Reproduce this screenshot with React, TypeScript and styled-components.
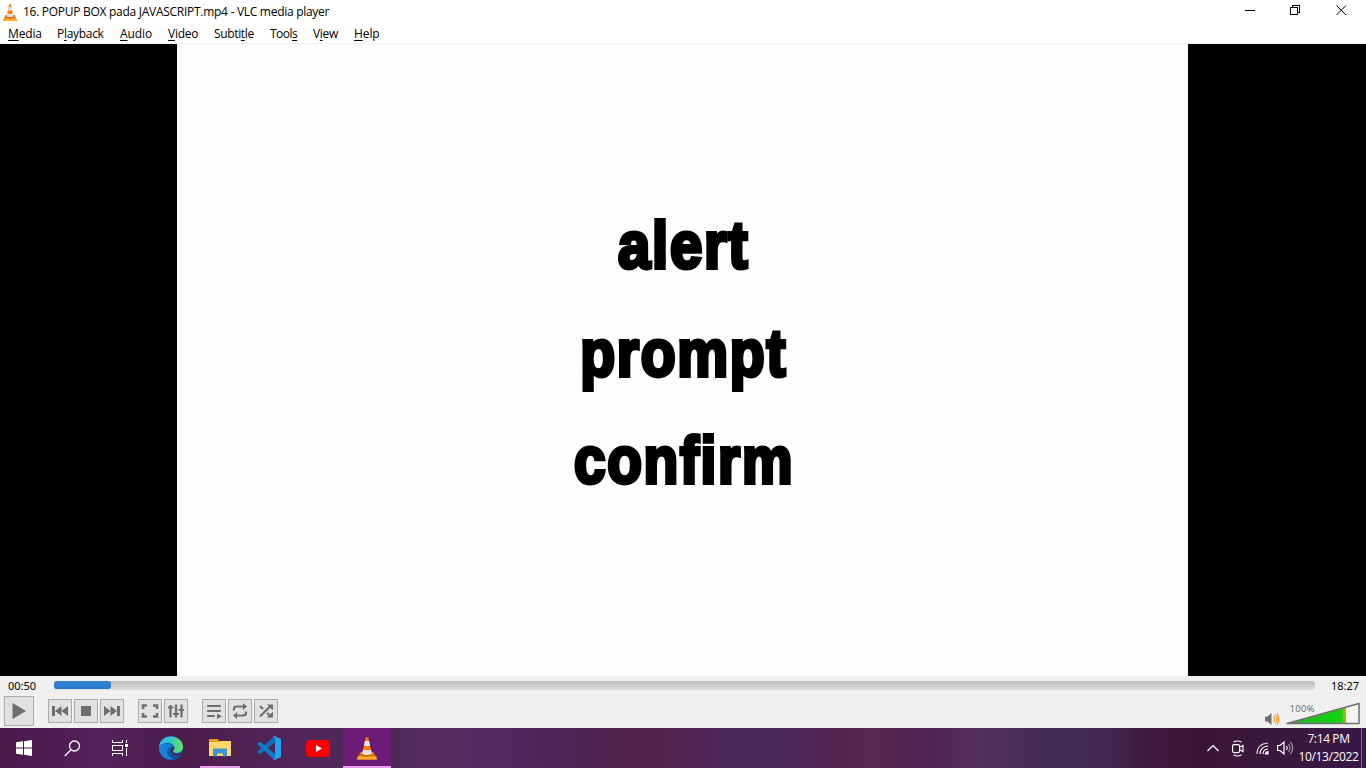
import React from 'react';
import styled, { createGlobalStyle } from 'styled-components';

const Global = createGlobalStyle`
  * { box-sizing: border-box; }
  body { margin: 0; background: #000; overflow: hidden; font-family: "Open Sans", "Noto Sans", sans-serif; font-size: 12px; color: #000; }
  svg { display: block; flex: none; }
`;
const Window = styled.div`width: 1366px; height: 768px; display: flex; flex-direction: column;`;
const TitleBar = styled.header`height: 24px; background: #fff; display: flex; align-items: center; padding-left: 3px;`;
const Title = styled.span`margin-left: 6px; flex: 1; letter-spacing: -0.28px; white-space: pre; line-height: 22px;`;
const Caption = styled.div`width: 46px; height: 20px; display: flex; justify-content: center; align-items: center;`;
const Captions = styled.div`display: flex; align-self: flex-start; margin-right: 2px;`;
const MenuBar = styled.nav`height: 20px; background: #fff; border-bottom: 1px solid #f0f0f0; display: flex; padding-left: 8px;`;
const MenuItem = styled.span<{ $w: number; $ls: number }>`width: ${p => p.$w}px; letter-spacing: ${p => p.$ls}px; line-height: 19px; white-space: nowrap; u { text-underline-offset: 2px; text-decoration-thickness: 1px; text-decoration-skip-ink: none; }`;
const Stage = styled.main`height: 632px; background: #000; display: flex; padding-left: 177px;`;
const Slide = styled.div`width: 1011px; background: #fdfdfd; display: flex; flex-direction: column; align-items: center; padding: 148px 0 0 3px;`;
const Word = styled.div<{ $sx: number }>`
  height: 107.5px; font: 700 66px/107.5px "Liberation Sans", Arial, sans-serif; -webkit-text-stroke: 4px #000;
  letter-spacing: 2px; transform: scaleX(${p => p.$sx}); font-variant-ligatures: none; white-space: nowrap;
`;
const Controls = styled.section`height: 52px; background: #f0f0f0; display: flex; flex-direction: column;`;
const SeekRow = styled.div`height: 20px; display: flex; align-items: center; padding: 0 7px 0 8px; justify-content: space-between;`;
const Time = styled.span`font: 11px/20px "Noto Sans", sans-serif; width: 28px; white-space: nowrap; text-align: right;`;
const Track = styled.div`width: 1261px; height: 9px; margin: 0 0 2px 1px; border-radius: 3px; background: linear-gradient(#bdbdbd, #dcdcdc);`;
const Played = styled.div`width: 57px; height: 8px; border-radius: 3px; background: linear-gradient(#3586d3, #2179cb);`;
const ButtonRow = styled.div`height: 32px; display: flex; align-items: flex-start; padding-left: 4px;`;
const Btn = styled.button<{ $big?: boolean; $gap?: number }>`
  width: ${p => (p.$big ? 30 : 24)}px; height: ${p => (p.$big ? 30 : 24)}px; padding: 0; margin: ${p => (p.$big ? 0 : 3)}px 0 0 ${p => p.$gap ?? 2}px;
  border: 1px solid #adadad; background: #e1e1e1; display: flex; align-items: center; justify-content: center;
`;
const Volume = styled.div`margin-left: auto; margin-right: 6px; display: flex; align-items: flex-end; height: 32px; gap: 5px; svg:first-child { margin-bottom: 2px; }`;
const Taskbar = styled.footer`
  height: 40px; display: flex; color: #fff;
  background: linear-gradient(90deg, #48184a 0, #54205a 100px, #4b1c4b 180px, #52265a 300px, #4b2855 390px, #572c60 430px, #512860 500px, #4c2350 590px, #54204b 650px, #4c2858 720px, #4e2a5b 790px, #522351 830px, #5a2750 870px, #4d2352 920px, #53305c 980px, #432b56 1050px, #432951 1100px, #401a40 1140px, #3b1537 1200px, #3a183c 1260px, #381847 1366px);
`;
const Task = styled.div<{ $w?: number; $open?: boolean; $active?: boolean }>`
  width: ${p => p.$w ?? 49}px; height: 40px; display: flex; align-items: center; justify-content: center;
  ${p => p.$active && 'background: #6c1c77;'}
  ${p => p.$open && `box-shadow: inset 0 -2px #e99cec;`}
`;
const Gap = styled.div<{ $w: number }>`width: ${p => p.$w}px; flex: none;`;
const Tray = styled.div`margin-left: auto; display: flex; align-items: center; padding-right: 4px;`;
const Clock = styled.div`width: 61px; text-align: center; font-size: 12px; line-height: 18px; letter-spacing: -0.38px; white-space: nowrap; margin-left: 4px;`;
const Peek = styled.div`width: 1px; height: 40px; background: #7a6685; margin-left: 2px;`;

const Cone = ({ w, h }: { w: number; h: number }) => (
  <svg width={w} height={h} viewBox="0 0 20 23" preserveAspectRatio="none">
    <path d="M3.500 15h13l3.500 7.500H0z" fill="#e8780c" /><path d="M.6 19.500h18.800l.6 3H0z" fill="#ffb02a" />
    <path d="M8.800.5h2.400L15 17q-5 2.500-10 0z" fill="#f47c08" />
    <path d="M7.900 4h4.200l1 4.500q-3.100 1-6.200 0zM6 12.700q4 1.300 8 0l1 4.300q-5 2-10 0z" fill="#e4e2e4" />
    <path d="M4.500 17.800q5.500 2.500 11 0" fill="none" stroke="#c4560a" />
  </svg>
);
const G = '#6e6e6e';
const menus: [string, string, string, number, number][] = [
  ['', 'M', 'edia', 49, -0.15], ['P', 'l', 'ayback', 63, -0.3], ['', 'A', 'udio', 48, -0.1], ['', 'V', 'ideo', 46, -0.25],
  ['Subti', 't', 'le', 56, -0.35], ['Tool', 's', '', 43, -0.55], ['V', 'i', 'ew', 41, -0.3], ['', 'H', 'elp', 40, -0.1],
];

export default function App() {
  return (
    <Window>
      <Global />
      <TitleBar>
        <Cone w={14} h={17} />
        <Title>16. POPUP BOX pada JAVASCRIPT.mp4 - VLC media player</Title>
        <Captions>
          <Caption><svg width="12" height="10" shapeRendering="crispEdges"><path d="M2 5.500h10" stroke="#000" /></svg></Caption>
          <Caption><svg width="10" height="10" shapeRendering="crispEdges" fill="none" stroke="#000"><path d="M.5 2.500h7v7h-7zM2.500 2V.5h7v7H8" /></svg></Caption>
          <Caption><svg width="11" height="11" stroke="#000"><path d="M.5.500l9.500 9.500m0-9.500l-9.500 9.500" /></svg></Caption>
        </Captions>
      </TitleBar>
      <MenuBar>
        {menus.map(([a, b, c, w, ls]) => <MenuItem key={a + b + c} $w={w} $ls={ls}>{a}<u>{b}</u>{c}</MenuItem>)}
      </MenuBar>
      <Stage>
        <Slide>
          <Word $sx={0.88}>alert</Word>
          <Word $sx={0.865}>prompt</Word>
          <Word $sx={0.86}>confirm</Word>
        </Slide>
      </Stage>
      <Controls>
        <SeekRow><Time>00:50</Time><Track><Played /></Track><Time>18:27</Time></SeekRow>
        <ButtonRow>
          <Btn $big $gap={0}><svg width="16" height="18"><path d="M1.500 1l13.500 8-13.500 8z" fill={G} /></svg></Btn>
          <Btn $gap={14}><svg width="16" height="12" fill={G}><path d="M0 1h3v10H0zM9.500 1v10L3 6zM16 1v10L9.500 6z" /></svg></Btn>
          <Btn><svg width="10" height="10"><path d="M0 0h10v10H0z" fill={G} /></svg></Btn>
          <Btn><svg width="16" height="12" fill={G}><path d="M13 1h3v10h-3zM6.500 1v10l6.500-5zM0 1v10l6.500-5z" /></svg></Btn>
          <Btn $gap={14}><svg width="18" height="14" fill="none" stroke={G} strokeWidth="2.500"><path d="M2 5V1.500h4M12 1.500h4V5M16 9v3.500h-4M6 12.500H2V9" /></svg></Btn>
          <Btn><svg width="16" height="14" fill="none" stroke={G} strokeWidth="2.200"><path d="M2.500 1v12.500M8 .5v13M13.500.500v13M0 3.500h5.500M5 10h6M10.500 6H16" /></svg></Btn>
          <Btn $gap={14}><svg width="16" height="15" fill="none" stroke={G} strokeWidth="2.200" strokeLinecap="round"><path d="M2 2h12M2 7h12M2 12h6" /><path d="M11 9.500v5.500l5-2.800z" fill={G} stroke="none" /></svg></Btn>
          <Btn><svg width="16" height="16" fill="none" stroke={G} strokeWidth="2.200"><path d="M2 7.500V6q0-2.500 2.500-2.500H12M14 8.500v1.500q0 2.500-2.500 2.500H4" /><path d="M11 0v7l4-3.500zM5 9v7l-4-3.500z" fill={G} stroke="none" /></svg></Btn>
          <Btn><svg width="16" height="16" fill="none" stroke={G} strokeWidth="2.200"><path d="M2 13.500L12 3.500M2 3l3 3M9 10l4 4" /><path d="M9 1.500H15v6zM9 14.500H15v-6z" fill={G} stroke="none" /></svg></Btn>
          <Volume>
            <svg width="15" height="14"><path d="M0 4.500h2.500l4-3.500v12l-4-3.500H0z" fill={G} /><path d="M8.500 4q2 3 0 6M10.300 2.500q3 4.500 0 9M12 1q3.500 6 0 12" fill="none" stroke="#f5a032" strokeWidth="1.300" /></svg>
            <svg width="75" height="28">
              <defs><linearGradient id="vol"><stop offset="0" stopColor="#37a937" /><stop offset=".75" stopColor="#12d012" /><stop offset=".94" stopColor="#20cf10" /><stop offset=".95" stopColor="#8fbf10" /></linearGradient></defs>
              <path d="M2 23.500L74 3.500v20z" fill="#f4f4f4" /><path d="M2 23.500L61 7.500v16z" fill="url(#vol)" />
              <path d="M2 23.500L74 3.500v20z" fill="none" stroke="#707070" strokeWidth="1.500" strokeLinejoin="round" />
              <text x="4.500" y="11.500" fontFamily="Open Sans" fontSize="9.500" fill="#666" textLength="25">100%</text>
            </svg>
          </Volume>
        </ButtonRow>
      </Controls>
      <Taskbar>
        <Task $w={48}><svg width="16" height="16" fill="#fff"><path d="M0 2.300l7-1V7.500H0zM8 1.200L16 0v7.500H8zM0 8.500h7v6.200l-7-1zM8 8.500h8V16l-8-1.200z" /></svg></Task>
        <Task $w={48}><svg width="17" height="17" fill="none" stroke="#fff" strokeWidth="1.300"><circle cx="10.500" cy="6" r="5" /><path d="M7 9.700L.8 16" /></svg></Task>
        <Task $w={48}><svg width="16" height="16" fill="none" stroke="#fff" shapeRendering="crispEdges"><path d="M.5 0v2.500h10V0M.5 16v-2.500h10V16M.5 5.500h10v5H.5zM14.500 0v3M14.500 8v8" /><path d="M13 4h3v3h-3z" fill="#fff" stroke="none" /></svg></Task>
        <Gap $w={2} />
        <Task>
          <svg width="24" height="24" viewBox="0 0 24 24">
            <defs><linearGradient id="eg" x2="1"><stop stopColor="#32b6ea" /><stop offset=".55" stopColor="#37cbc0" /><stop offset="1" stopColor="#66e34f" /></linearGradient></defs>
            <circle cx="12" cy="12" r="12" fill="#0d62b5" />
            <path d="M0 11C1-1 15-2 21 4c4 4 4 10 0 12-3 1.500-7 1-7-.500s1.500-2 1.300-4C15 7 5 4 0 11z" fill="url(#eg)" />
            <path d="M0 11c4-5 12-4.500 14 0-4-1-6 2-5.500 5 .5 4 4.500 6 8 6C8 26 0 20 0 11z" fill="#1683d8" />
            <path d="M9 13c-.5 5 5 8 13 5-2 3-4.500 4.500-7 5-5-.500-8-6-6-10z" fill="#0b4d97" />
            <path d="M14 15.500c0 2 6 3 9 .500l1 0-2 2.500C14 21 10 16 12 12.500q1-2 3.300-1c.2 2-1.300 2.500-1.300 4z" fill="#4d2150" />
          </svg>
        </Task>
        <Gap $w={5} />
        <Task $w={40} $open>
          <svg width="22" height="20"><path d="M0 1h9l1 2h11v15H0z" fill="#e6a20c" /><path d="M0 4h10l1-1h11v15H0z" fill="#ffd76b" /><path d="M4 18.500v-7q0-1 1-1h12q1 0 1 1v7h-4v-3H8v3z" fill="#3a94d8" /></svg>
        </Task>
        <Gap $w={4} />
        <Task>
          <svg width="24" height="24"><path d="M17.500 0L1 15l-.8 1L2 18l1.500-.2L18 6z" fill="#0a73bb" /><path d="M17.500 24L1 9 .2 8 2 6l1.500.2L18 18z" fill="#087fcb" /><path d="M17.500 0L24 3v18l-6.500 3q-1 0-1.500-1l2-1V2l-2-1q.5-1 1.500-1z" fill="#24a0ec" /></svg>
        </Task>
        <Task><svg width="24" height="17"><rect width="24" height="17" rx="4" fill="#f00" /><path d="M10 5l6 3.500-6 3.500z" fill="#fff" /></svg></Task>
        <Gap $w={1} />
        <Task $w={48} $open $active><Cone w={20} h={23} /></Task>
        <Tray>
          <svg width="12" height="8" fill="none" stroke="#fff" strokeWidth="1.200"><path d="M.5 7L6 1.500 11.500 7" /></svg>
          <Gap $w={13} />
          <svg width="13" height="17" fill="none" stroke="#fff" strokeWidth="1.200"><rect x=".6" y="4.600" width="7" height="8" rx="1.500" /><path d="M8 7l3-1.500v6L8 10M1.500 2q4-2 8 0M1.500 15q4 2 8 0" /></svg>
          <Gap $w={11} />
          <svg width="13" height="13" fill="none" stroke="#fff" strokeWidth="1.200"><path d="M1 12Q1 2 12 1" opacity=".8" /><path d="M4 12q0-7 8-8M7 12q0-4.500 5-5" /><path d="M9.500 12q0-2 2.500-2.500V12z" fill="#fff" /></svg>
          <Gap $w={8} />
          <svg width="17" height="14" fill="none" stroke="#fff" strokeWidth="1.200"><path d="M.5 4.500H3l4-3.500v12L3 9.500H.5z" /><path d="M9.500 5q1.500 2 0 4" /><path d="M11.500 3q3 4 0 8M13.500 1q4.500 6 0 12" opacity=".55" /></svg>
          <Clock>7:14 PM<br />10/13/2022</Clock>
          <Peek />
        </Tray>
      </Taskbar>
    </Window>
  );
}
